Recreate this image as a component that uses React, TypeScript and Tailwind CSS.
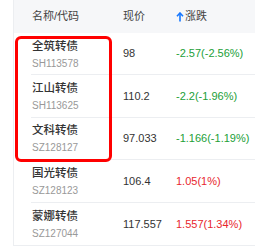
import React from "react";

const rows = [
  { name: "全筑转债", code: "SH113578", price: "98", change: "-2.57(-2.56%)", up: false },
  { name: "江山转债", code: "SH113625", price: "110.2", change: "-2.2(-1.96%)", up: false },
  { name: "文科转债", code: "SZ128127", price: "97.033", change: "-1.166(-1.19%)", up: false },
  { name: "国光转债", code: "SZ128123", price: "106.4", change: "1.05(1%)", up: true },
  { name: "蒙娜转债", code: "SZ127044", price: "117.557", change: "1.557(1.34%)", up: true },
];

export default function App() {
  return (
    <div
      className="w-[255px] h-[249px] bg-white overflow-hidden relative"
      style={{ fontFamily: '"Liberation Sans", "Noto Sans CJK SC", sans-serif' }}
    >
      <div className="ml-[13px] w-[260px] border-l border-b border-[#eceef1]">
        <div className="h-[33px] bg-[#f6f7f9] flex items-center text-[11px] text-[#444]">
          <div className="w-[109px] pl-[18px]">名称/代码</div>
          <div className="w-[53px]">现价</div>
          <div className="flex items-center">
            <svg width="8" height="10" viewBox="0 0 8 10" className="mr-[1px]">
              <path d="M4 1 L4 9.5" stroke="#1677ff" strokeWidth="1.6" />
              <path d="M1 4.2 L4 1 L7 4.2" stroke="#1677ff" strokeWidth="1.6" fill="none" />
            </svg>
            <span>涨跌</span>
          </div>
        </div>
        {rows.map((r, i) => (
          <div key={r.code} className="flex">
            <div className="w-[17px]" />
            <div
              className={
                "flex-1 h-[42.4px] flex items-center " +
                (i < rows.length - 1 ? "border-b border-[#eceef1]" : "")
              }
            >
              <div className="w-[92px] flex flex-col justify-center pl-[1px] pt-[1px]">
                <div className="text-[11.5px] leading-[14px] font-medium text-[#333]">{r.name}</div>
                <div className="text-[10px] leading-[12px] mt-[5px] text-[#999]">{r.code}</div>
              </div>
              <div className="w-[53px] text-[11px] text-[#333]">{r.price}</div>
              <div className={"text-[11px] " + (r.up ? "text-[#e8262d]" : "text-[#22a038]")}>{r.change}</div>
            </div>
          </div>
        ))}
      </div>
      <div className="absolute left-[15px] top-[36px] w-[97px] h-[126px] border-[3px] border-[#ff0000] rounded-[6px]" />
    </div>
  );
}
